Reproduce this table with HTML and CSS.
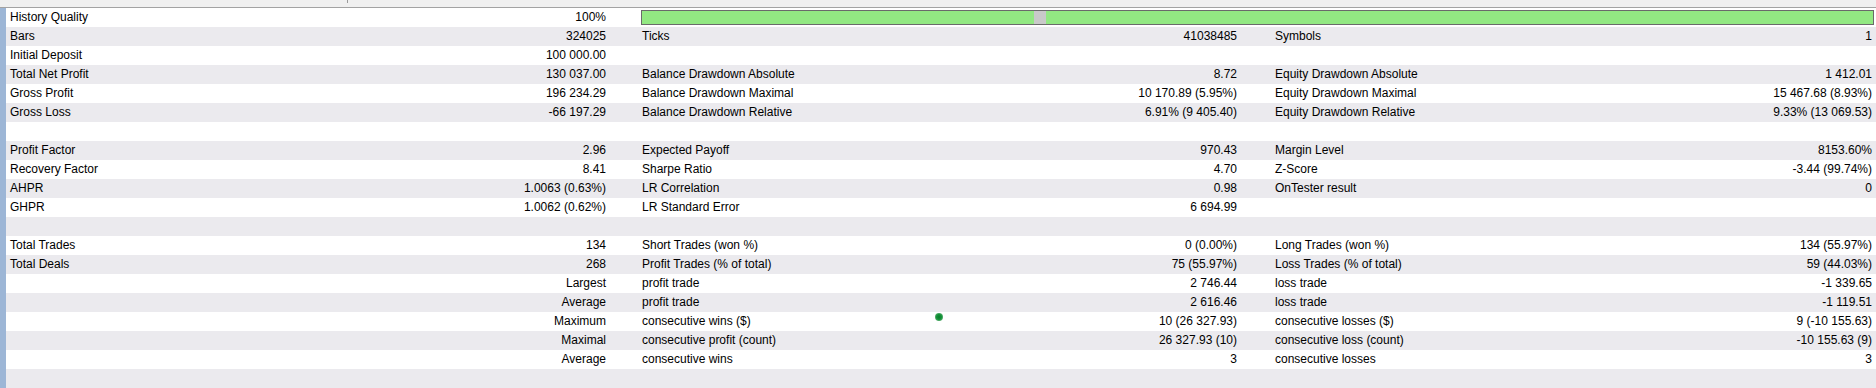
FILE: index.html
```html
<!DOCTYPE html>
<html lang="en">
<head>
<meta charset="utf-8">
<title>Strategy Tester Report</title>
<link rel="stylesheet" href="styles.css">
</head>
<body>
<div class="window">
  <div class="topbar"><span class="tick"></span></div>
  <div class="main">
    <div class="sidebar"></div>
    <div class="table">
      <div class="row">
        <div class="grp g1"><span>History Quality</span><span>100%</span></div>
        <div class="quality"></div>
      </div>
      <div class="row">
        <div class="grp g1"><span>Bars</span><span>324025</span></div>
        <div class="grp g2"><span>Ticks</span><span>41038485</span></div>
        <div class="grp g3"><span>Symbols</span><span>1</span></div>
      </div>
      <div class="row">
        <div class="grp g1"><span>Initial Deposit</span><span>100 000.00</span></div>
      </div>
      <div class="row">
        <div class="grp g1"><span>Total Net Profit</span><span>130 037.00</span></div>
        <div class="grp g2"><span>Balance Drawdown Absolute</span><span>8.72</span></div>
        <div class="grp g3"><span>Equity Drawdown Absolute</span><span>1 412.01</span></div>
      </div>
      <div class="row">
        <div class="grp g1"><span>Gross Profit</span><span>196 234.29</span></div>
        <div class="grp g2"><span>Balance Drawdown Maximal</span><span>10 170.89 (5.95%)</span></div>
        <div class="grp g3"><span>Equity Drawdown Maximal</span><span>15 467.68 (8.93%)</span></div>
      </div>
      <div class="row">
        <div class="grp g1"><span>Gross Loss</span><span>-66 197.29</span></div>
        <div class="grp g2"><span>Balance Drawdown Relative</span><span>6.91% (9 405.40)</span></div>
        <div class="grp g3"><span>Equity Drawdown Relative</span><span>9.33% (13 069.53)</span></div>
      </div>
      <div class="row"></div>
      <div class="row">
        <div class="grp g1"><span>Profit Factor</span><span>2.96</span></div>
        <div class="grp g2"><span>Expected Payoff</span><span>970.43</span></div>
        <div class="grp g3"><span>Margin Level</span><span>8153.60%</span></div>
      </div>
      <div class="row">
        <div class="grp g1"><span>Recovery Factor</span><span>8.41</span></div>
        <div class="grp g2"><span>Sharpe Ratio</span><span>4.70</span></div>
        <div class="grp g3"><span>Z-Score</span><span>-3.44 (99.74%)</span></div>
      </div>
      <div class="row">
        <div class="grp g1"><span>AHPR</span><span>1.0063 (0.63%)</span></div>
        <div class="grp g2"><span>LR Correlation</span><span>0.98</span></div>
        <div class="grp g3"><span>OnTester result</span><span>0</span></div>
      </div>
      <div class="row">
        <div class="grp g1"><span>GHPR</span><span>1.0062 (0.62%)</span></div>
        <div class="grp g2"><span>LR Standard Error</span><span>6 694.99</span></div>
      </div>
      <div class="row"></div>
      <div class="row">
        <div class="grp g1"><span>Total Trades</span><span>134</span></div>
        <div class="grp g2"><span>Short Trades (won %)</span><span>0 (0.00%)</span></div>
        <div class="grp g3"><span>Long Trades (won %)</span><span>134 (55.97%)</span></div>
      </div>
      <div class="row">
        <div class="grp g1"><span>Total Deals</span><span>268</span></div>
        <div class="grp g2"><span>Profit Trades (% of total)</span><span>75 (55.97%)</span></div>
        <div class="grp g3"><span>Loss Trades (% of total)</span><span>59 (44.03%)</span></div>
      </div>
      <div class="row">
        <div class="grp g1"><span></span><span>Largest</span></div>
        <div class="grp g2"><span>profit trade</span><span>2 746.44</span></div>
        <div class="grp g3"><span>loss trade</span><span>-1 339.65</span></div>
      </div>
      <div class="row">
        <div class="grp g1"><span></span><span>Average</span></div>
        <div class="grp g2"><span>profit trade</span><span>2 616.46</span></div>
        <div class="grp g3"><span>loss trade</span><span>-1 119.51</span></div>
      </div>
      <div class="row">
        <div class="grp g1"><span></span><span>Maximum</span></div>
        <div class="grp g2"><span>consecutive wins ($)</span><span>10 (26 327.93)</span></div>
        <div class="grp g3"><span>consecutive losses ($)</span><span>9 (-10 155.63)</span></div>
      </div>
      <div class="row">
        <div class="grp g1"><span></span><span>Maximal</span></div>
        <div class="grp g2"><span>consecutive profit (count)</span><span>26 327.93 (10)</span></div>
        <div class="grp g3"><span>consecutive loss (count)</span><span>-10 155.63 (9)</span></div>
      </div>
      <div class="row">
        <div class="grp g1"><span></span><span>Average</span></div>
        <div class="grp g2"><span>consecutive wins</span><span>3</span></div>
        <div class="grp g3"><span>consecutive losses</span><span>3</span></div>
      </div>
      <div class="row"></div>
      <span class="cursor-dot"></span>
    </div>
  </div>
</div>
</body>
</html>
```
FILE: styles.css
```css
html, body {
  margin: 0;
  padding: 0;
  background: #ffffff;
  overflow: hidden;
}

.window {
  width: 1876px;
  height: 388px;
  font-family: "Liberation Sans", Arial, sans-serif;
  font-size: 12px;
  color: #000000;
}

.topbar {
  height: 7px;
  background: #f0f0f0;
  border-bottom: 1px solid #a3a3a3;
  padding-left: 347px;
  display: flex;
  align-items: flex-start;
}

.tick {
  width: 1px;
  height: 3px;
  background: #9a9a9a;
}

.main {
  display: flex;
  height: 380px;
}

.sidebar {
  width: 6px;
  flex: none;
  background: #9db6d6;
}

.table {
  position: relative;
  flex: 1;
  display: flex;
  flex-direction: column;
}

.row {
  height: 19px;
  line-height: 19px;
  display: grid;
  grid-template-columns: 596px 36px 595px 38px 597px;
  padding-left: 4px;
  white-space: nowrap;
  background: #ffffff;
}

.row:nth-child(even) {
  background: #ebeaee;
}

.grp {
  display: flex;
  justify-content: space-between;
}

.g1 { grid-column: 1; }
.g2 { grid-column: 3; }
.g3 { grid-column: 5; }

.quality {
  grid-column: 3 / 6;
  margin: 2px -2px 0 -1px;
  height: 15px;
  box-sizing: border-box;
  border: 1px solid #6a6a6a;
  background: linear-gradient(to right, #92e882 0, #92e882 392px, #c9c9c9 392px, #c9c9c9 404px, #92e882 404px);
}

.cursor-dot {
  position: absolute;
  left: 929px;
  top: 305px;
  width: 8px;
  height: 8px;
  border-radius: 50%;
  background: radial-gradient(circle, #0c7a2a 0, #15943a 45%, #5fae74 75%, #9cc7a6 100%);
}
```
